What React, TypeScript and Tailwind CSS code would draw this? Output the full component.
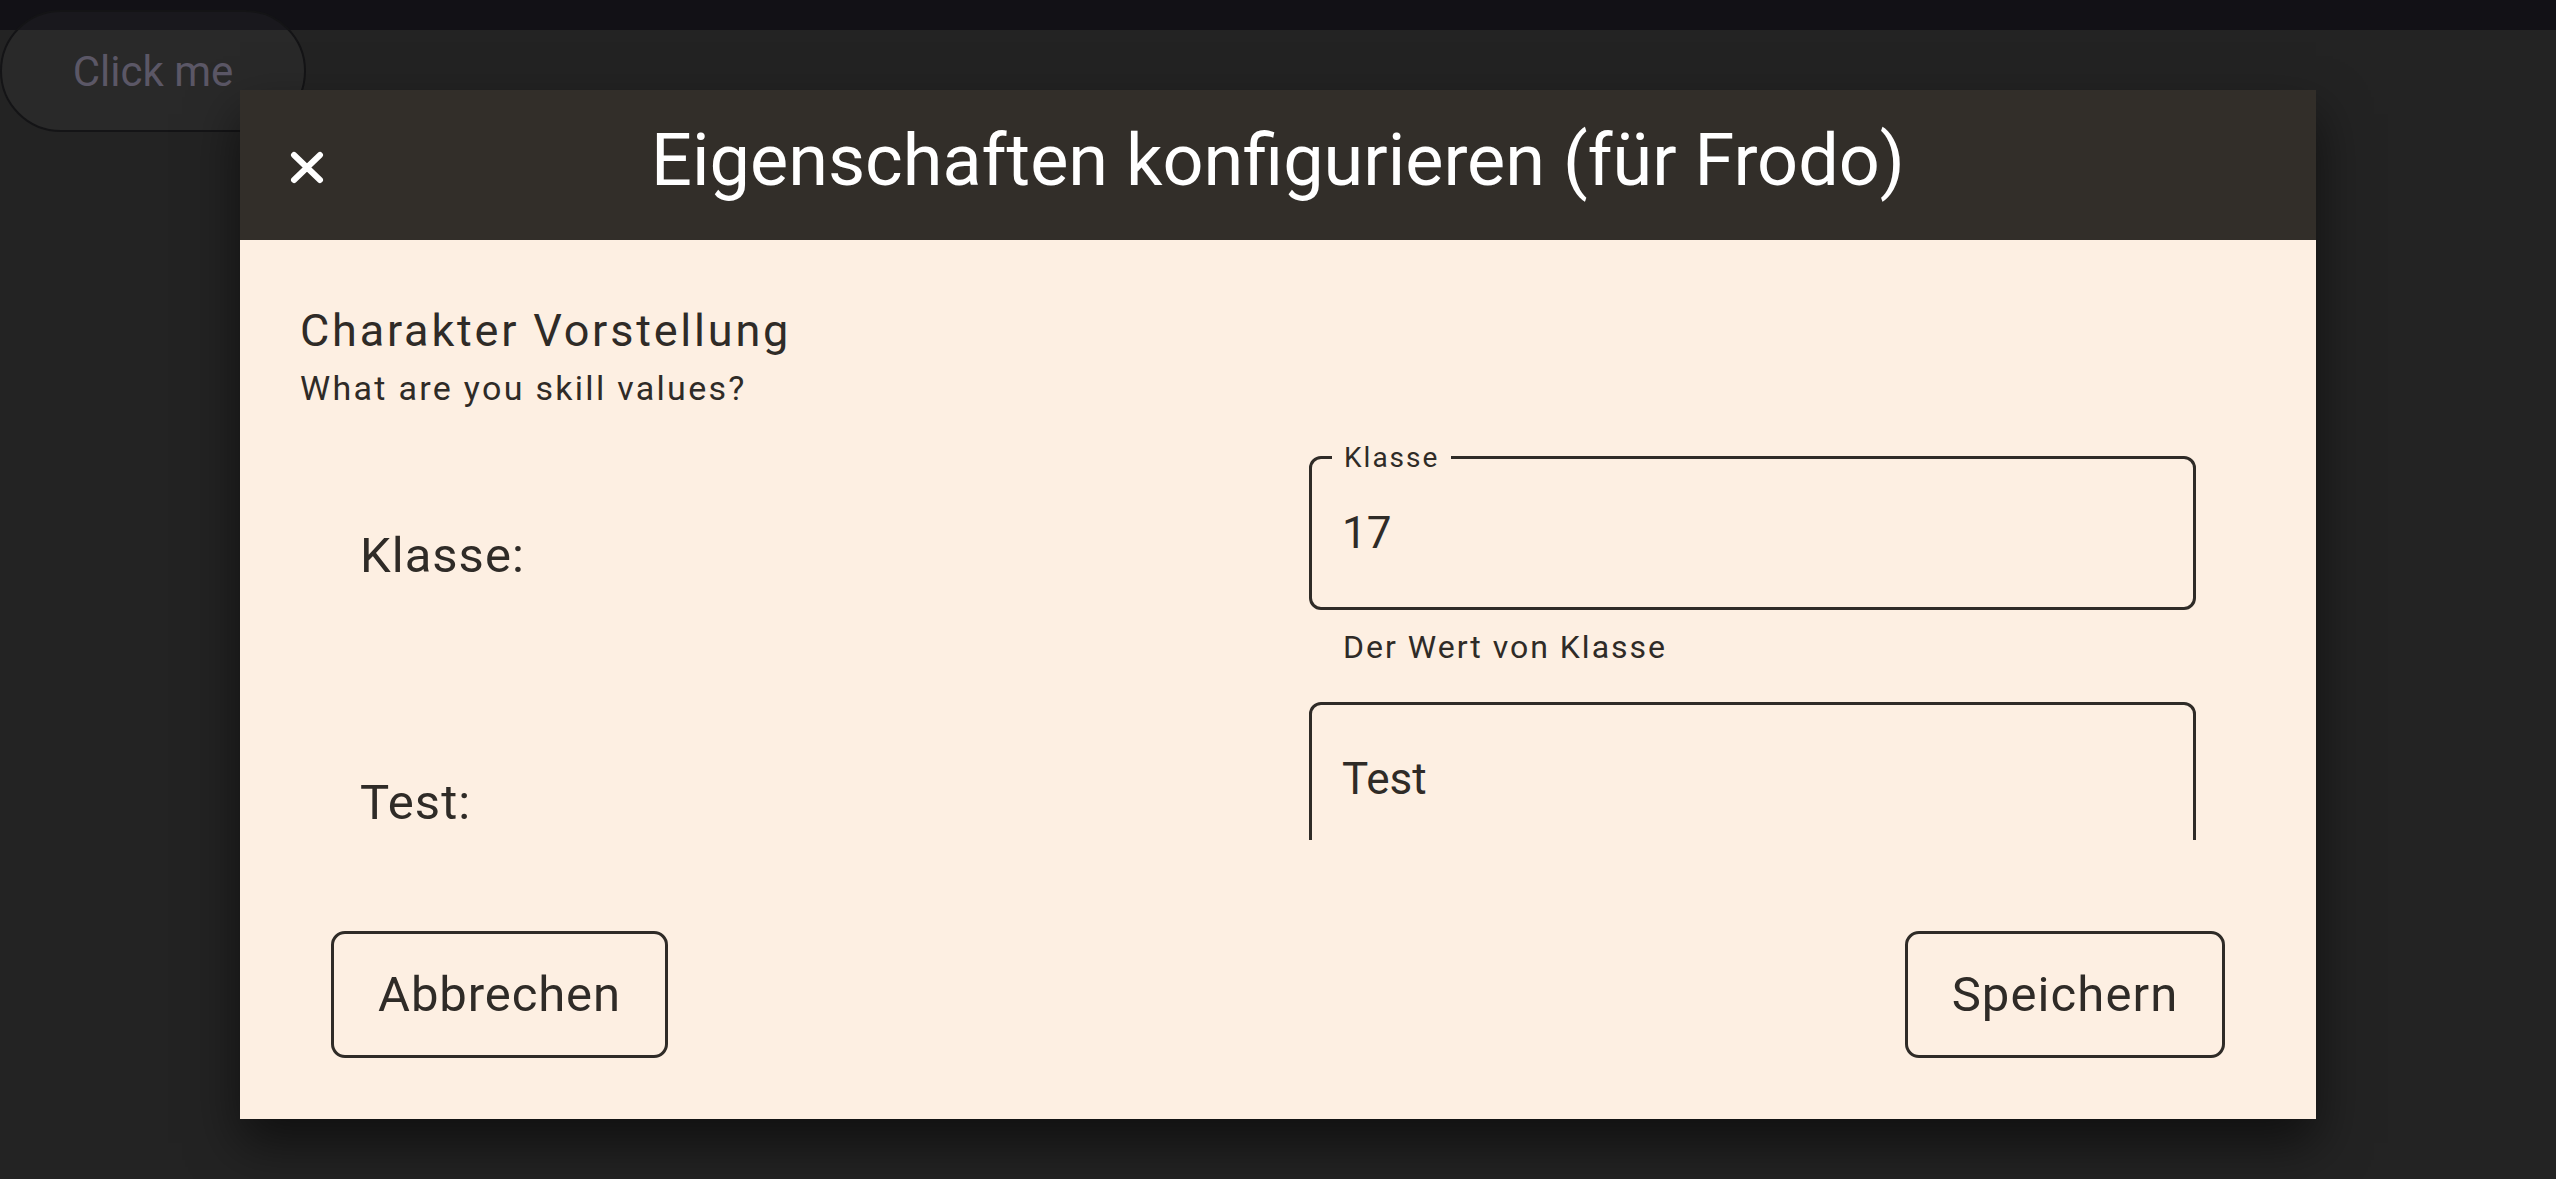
function CloseIcon() {
  return (
    <svg width="34" height="33" viewBox="0 0 34 33" fill="none">
      <path d="M4 4L30 29M30 4L4 29" stroke="#ffffff" strokeWidth="6" strokeLinecap="round" />
    </svg>
  );
}

type FieldProps = { label?: string; value: string; helper: string };

function Field({ label, value, helper }: FieldProps) {
  return (
    <div className="flex flex-col">
      <div className="relative flex h-[154px] items-center rounded-[12px] border-[3px] border-[#2f2b27] pl-[30px]">
        {label && (
          <span className="absolute left-[20px] top-[-1px] -translate-y-1/2 bg-[#fdefe2] px-[12px] text-[28px] leading-none tracking-[2px]">
            {label}
          </span>
        )}
        <span className="text-[44px] leading-none">{value}</span>
      </div>
      <span className="mt-[19px] pl-[34px] text-[32px] leading-[1.172] tracking-[2px]">{helper}</span>
    </div>
  );
}

export default function App() {
  const rows = [
    { name: "Klasse:", label: "Klasse", value: "17", helper: "Der Wert von Klasse" },
    { name: "Test:", label: undefined, value: "Test", helper: "Der Wert von Test" },
  ];

  return (
    <div className="relative h-[1179px] w-full overflow-hidden bg-[#232323] font-['Roboto',sans-serif]">
      <div className="h-[30px] bg-[#121116]" />

      <button className="absolute left-0 top-[10px] h-[122px] w-[306px] rounded-full border-2 border-[#141416] bg-white/[0.03] text-[42px] text-[#5b5766]">
        Click me
      </button>

      {/* dialog */}
      <div className="absolute left-[240px] top-[90px] flex w-[2076px] flex-col shadow-[0_24px_48px_rgba(0,0,0,0.55)]">
        <div className="grid h-[150px] grid-cols-[1fr_auto_1fr] items-center bg-[#322e29]">
          <div className="pl-[50px] pt-[4px]">
            <CloseIcon />
          </div>
          <h1 className="pb-[8px] text-[72px] leading-none text-white">
            Eigenschaften konfigurieren (für Frodo)
          </h1>
          <div />
        </div>

        <div className="flex flex-col bg-[#fdefe2] text-[#2f2b27]">
          <div className="h-[600px] overflow-hidden px-[60px] pt-[65px]">
            <h2 className="text-[45px] leading-[1.172] tracking-[2.8px]">Charakter Vorstellung</h2>
            <p className="mt-[11px] text-[34px] leading-[1.172] tracking-[2.3px]">What are you skill values?</p>

            <div className="mt-[47px] grid grid-cols-[949px_1fr] items-center gap-y-[36px] px-[60px]">
              {rows.map((row) => (
                <div key={row.name} className="contents">
                  <span className="pb-[10px] text-[49px] leading-[1.172] tracking-[1px]">{row.name}</span>
                  <Field label={row.label} value={row.value} helper={row.helper} />
                </div>
              ))}
            </div>
          </div>

          <div className="flex items-center justify-between px-[91px] pb-[61px] pt-[91px]">
            <button className="h-[127px] w-[337px] rounded-[14px] border-[3px] border-[#2f2b27] text-[49px] tracking-[0.9px]">
              Abbrechen
            </button>
            <button className="h-[127px] w-[320px] rounded-[14px] border-[3px] border-[#2f2b27] text-[49px] tracking-[1.1px]">
              Speichern
            </button>
          </div>
        </div>
      </div>
    </div>
  );
}
